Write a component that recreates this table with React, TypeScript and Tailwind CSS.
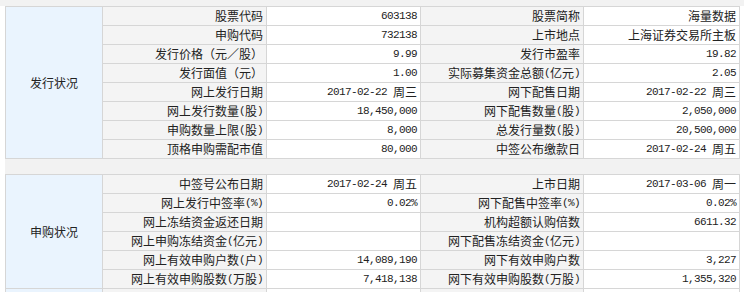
import React from 'react'

type Row = [string, string, string, string]

const issueRows: Row[] = [
  ['股票代码', '603138', '股票简称', '海量数据'],
  ['申购代码', '732138', '上市地点', '上海证券交易所主板'],
  ['发行价格（元／股）', '9.99', '发行市盈率', '19.82'],
  ['发行面值（元）', '1.00', '实际募集资金总额(亿元)', '2.05'],
  ['网上发行日期', '2017-02-22 周三', '网下配售日期', '2017-02-22 周三'],
  ['网上发行数量(股)', '18,450,000', '网下配售数量(股)', '2,050,000'],
  ['申购数量上限(股)', '8,000', '总发行量数(股)', '20,500,000'],
  ['顶格申购需配市值', '80,000', '中签公布缴款日', '2017-02-24 周五'],
]

const subscribeRows: Row[] = [
  ['中签号公布日期', '2017-02-24 周五', '上市日期', '2017-03-06 周一'],
  ['网上发行中签率(%)', '0.02%', '网下配售中签率(%)', '0.02%'],
  ['网上冻结资金返还日期', '', '机构超额认购倍数', '6611.32'],
  ['网上申购冻结资金(亿元)', '', '网下配售冻结资金(亿元)', ''],
  ['网上有效申购户数(户)', '14,089,190', '网下有效申购户数', '3,227'],
  ['网上有效申购股数(万股)', '7,418,138', '网下有效申购股数(万股)', '1,355,320'],
]

// ascii runs get the narrow mono face, everything else the CJK face
function Txt({ text }: { text: string }) {
  const parts = text.match(/[\x20-\x7e]+|[^\x20-\x7e]+/g) || []
  return (
    <>
      {parts.map((p, i) =>
        /^[\x20-\x7e]+$/.test(p) ? (
          <span
            key={i}
            className="font-['Liberation_Mono',monospace] text-[11px] tracking-[-0.6px] whitespace-pre"
          >
            {p}
          </span>
        ) : (
          <span key={i}>{p}</span>
        ),
      )}
    </>
  )
}

function Section({ title, rows, extra = false }: { title: string; rows: Row[]; extra?: boolean }) {
  return (
    <div className="ml-[5px] w-[735px] grid grid-cols-[96px_163px_153px_162px_155px] auto-rows-[18px] gap-px p-px bg-[#d6d6d6]">
      <div
        className="bg-[#eaf4fe] flex items-center justify-center"
        style={{ gridRow: `span ${rows.length}` }}
      >
        {title}
      </div>
      {rows.map((r, i) => (
        <React.Fragment key={i}>
          <div className="bg-[#f4f4f4] flex items-center justify-end pr-[3px] whitespace-nowrap">
            <Txt text={r[0]} />
          </div>
          <div className="bg-white flex items-center justify-end pr-[3px] whitespace-nowrap">
            <Txt text={r[1]} />
          </div>
          <div className="bg-[#f4f4f4] flex items-center justify-end pr-[3px] whitespace-nowrap">
            <Txt text={r[2]} />
          </div>
          <div className="bg-white flex items-center justify-end pr-[3px] whitespace-nowrap">
            <Txt text={r[3]} />
          </div>
        </React.Fragment>
      ))}
      {extra && (
        <>
          <div className="bg-[#eaf4fe]" />
          <div className="bg-[#f4f4f4]" />
          <div className="bg-white" />
          <div className="bg-[#f4f4f4]" />
          <div className="bg-white" />
        </>
      )}
    </div>
  )
}

export default function App() {
  return (
    <div className="w-[744px] h-[292px] overflow-hidden bg-white text-[12px] leading-[18px] text-[#222] font-['Noto_Sans_CJK_SC',sans-serif]">
      <div className="h-[6px] bg-[#f2f2f2]" />
      <Section title="发行状况" rows={issueRows} />
      <div className="ml-[5px] w-[735px] h-[15px] bg-[#f2f2f2]" />
      <Section title="申购状况" rows={subscribeRows} extra />
    </div>
  )
}
